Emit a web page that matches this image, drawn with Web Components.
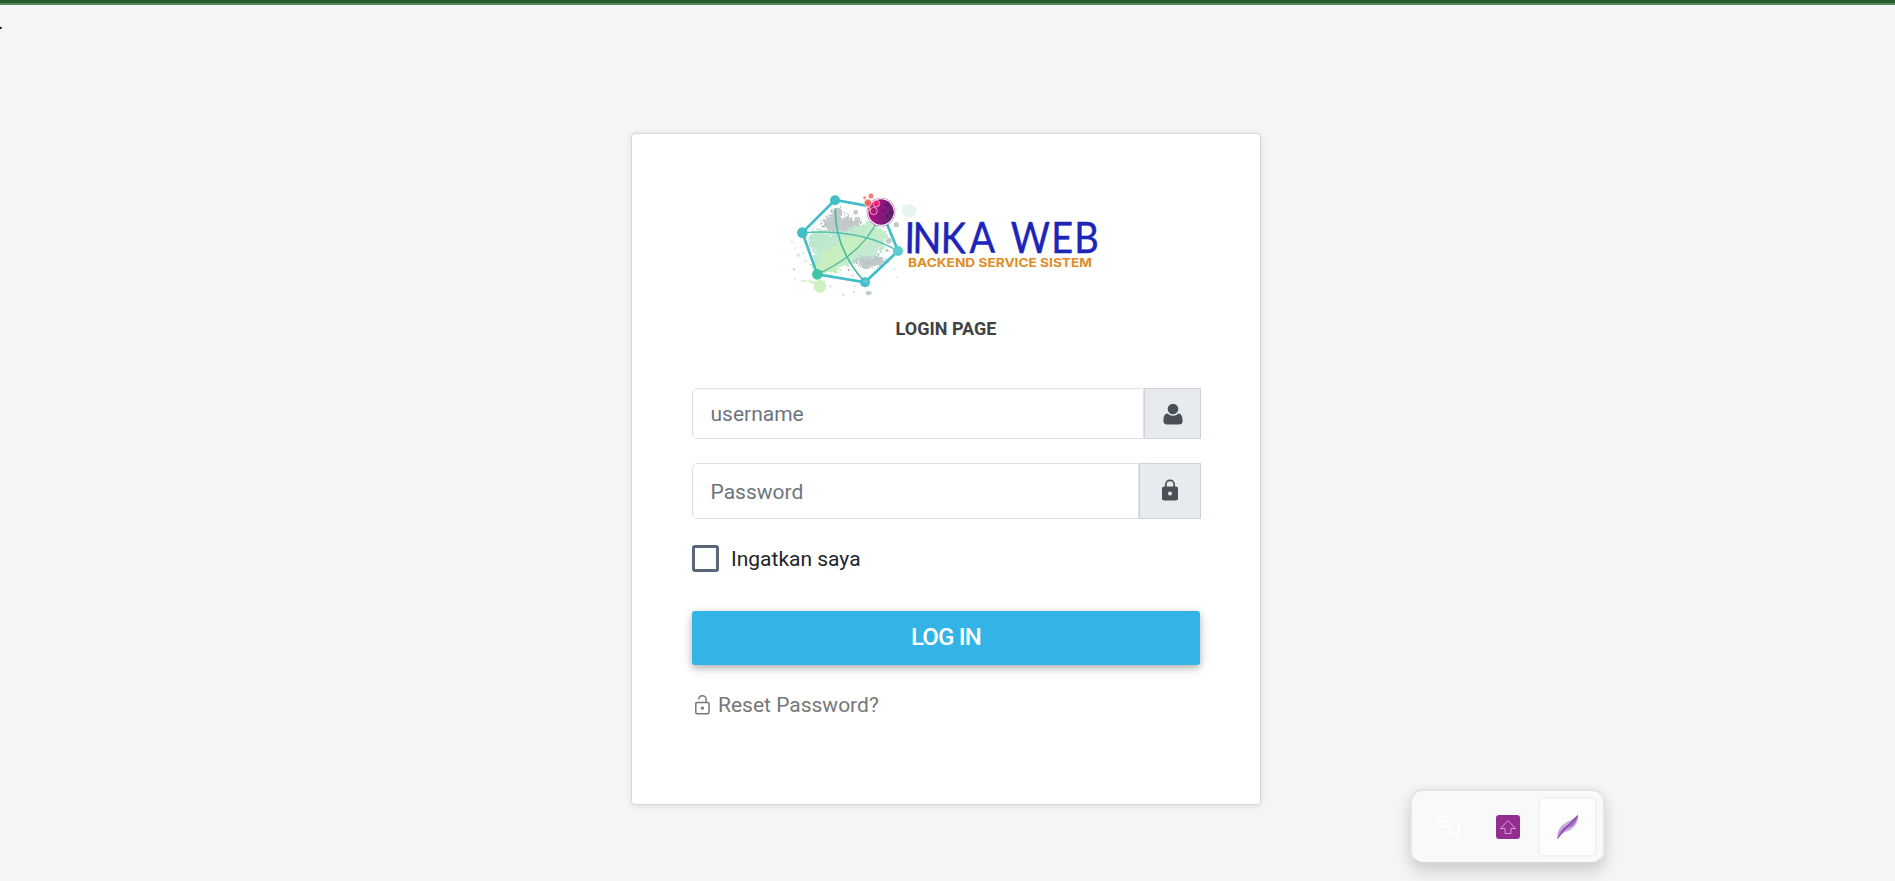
<!DOCTYPE html>
<html lang="id">
<head>
<meta charset="utf-8">
<title>Login</title>
<style>
html,body{margin:0;height:100%;overflow:hidden;background:#f5f5f5;font-family:Roboto,sans-serif}
</style>
</head>
<body>
<login-page></login-page>
<script>
const define = (name, html) => customElements.define(name, class extends HTMLElement {
  constructor() {
    super();
    const t = document.createElement('template');
    t.innerHTML = html;
    this.attachShadow({mode: 'open'}).append(t.content.cloneNode(true));
  }
});

define('inka-logo', `
<style>:host{display:block;width:330px;height:125px}svg{display:block}</style>
<svg width="330" height="125" viewBox="0 0 990 375">
  <defs><linearGradient id="ball" x1="0" y1="0" x2="1" y2="0.3"><stop offset="0" stop-color="#c5107c"/><stop offset=".5" stop-color="#981380"/><stop offset="1" stop-color="#65246f"/></linearGradient>
  <linearGradient id="mint" x1="0" y1="0" x2="1" y2="1"><stop offset="0" stop-color="#b5e5d4"/><stop offset=".55" stop-color="#c5eccb"/><stop offset="1" stop-color="#bfe8dc"/></linearGradient>
  <filter id="splash" x="-10%" y="-10%" width="120%" height="120%"><feTurbulence type="fractalNoise" baseFrequency=".12" numOctaves="3" seed="4"/><feDisplacementMap in="SourceGraphic" scale="34" xChannelSelector="R" yChannelSelector="G"/></filter></defs>
  <g fill="#c3c8ca" filter="url(#splash)">
    <path d="M126 118l22-9 14-22 20-4 8 17-9 14 22-5 18 9 15-7 8 18-14 12-5 20-28 6-22-12-18 5-16-13-13-3z"/>
    <path d="M217 232l27-12 18 12 21-9 24 5 8 18-13 13-21-2-13 10-24-2-5-15-20 2z"/>
    <path d="M88 190l18-9 14 9-5 22-20 4z"/><path d="M288 151l20-5 13 19-8 15-21-3z"/>
  </g>
  <g fill="#c3c8ca"><circle cx="227" cy="97" r="7"/><circle cx="349" cy="134" r="8"/><circle cx="326" cy="182" r="9"/><ellipse cx="266" cy="339" rx="9" ry="6" fill="#b9cfc9"/><circle cx="321" cy="211" r="5"/><circle cx="174" cy="96" r="13"/></g>
  <g filter="url(#splash)">
  <path d="M86 169l17-20 32 3 16 11 20-12 28 3 22-15 27-3 18-13 21 3 14 22 20 6 2 23-14 14 1 20-20 10-11 14-23-4-20 15-18-2-13 13-24-1-15 16-25 5-20-5-24-9-1-20 11-16-7-18-16-14z" fill="url(#mint)"/>
  <path d="M158 199l32-25 35-8 18 11 25-3-15 24-27 15-10 21-29 14-9 25-27 10-28-3-22-13 18-18 3-23z" fill="#c9f0bd" opacity=".85"/>
  <path d="M222 240l20-14 10 10 22-4 20-4 12 10-14 14-20-2-10 8-22-2z" fill="#bcc8ca" opacity=".85"/>
  </g>
  <path d="M102 306l15-7 17 3 5 18-8 16-16 3-14-11zM70 300l30 2 8 8-10 2-14-8-14 1z" fill="#cff0c0"/>
  <path d="M367 78l26-6 17 13-4 21-21 8-17-12zM344 82l10 1-3 9-8-1z" fill="#e7f5ef"/>
  <g fill="#d8eedf"><circle cx="36" cy="186" r="4"/><circle cx="47" cy="205" r="3"/><circle cx="55" cy="225" r="6"/><circle cx="42" cy="268" r="4" fill="#bfe5b5"/><circle cx="76" cy="243" r="4"/><circle cx="70" cy="219" r="4"/><circle cx="343" cy="267" r="4"/><circle cx="351" cy="292" r="3"/><circle cx="226" cy="318" r="4"/><circle cx="151" cy="319" r="4"/><circle cx="66" cy="303" r="4"/><circle cx="45" cy="297" r="3"/><circle cx="380" cy="117" r="3"/></g>
  <g fill="#a5adaf"><circle cx="128" cy="96" r="2"/><circle cx="135" cy="88" r="2"/><circle cx="206" cy="270" r="3"/><circle cx="218" cy="286" r="2"/><circle cx="140" cy="269" r="2"/><circle cx="290" cy="279" r="2"/><circle cx="323" cy="246" r="3"/><circle cx="81" cy="142" r="2"/><circle cx="165" cy="276" r="2"/><circle cx="305" cy="263" r="2"/><circle cx="222" cy="336" r="2"/><circle cx="190" cy="345" r="2"/></g>
  <g fill="none" stroke="#42bec9" stroke-width="8"><path d="M258 77L165 60 67 158 112 283 255 307 354 213 304 90"/></g>
  <g fill="none"><path d="M67 158Q240 145 354 213" stroke="#57bfae" stroke-width="4"/><path d="M166 85Q163 205 255 307" stroke="#4abaa4" stroke-width="5"/><path d="M112 283Q250 220 296 115" stroke="#50bda1" stroke-width="4"/></g>
  <g fill="#42bec9"><circle cx="165" cy="61" r="15"/><circle cx="67" cy="158" r="16"/><circle cx="112" cy="283" r="16" fill="#41c4a1"/><circle cx="255" cy="307" r="15"/><circle cx="354" cy="213" r="15" fill="#5bcbd0"/></g>
  <path d="M250 301l8-4 7 7-6 6-10-1z" fill="#62c9d1"/>
  <circle cx="303" cy="96" r="43" fill="#b77ba8"/><circle cx="303" cy="96" r="41" fill="#fff"/><circle cx="303" cy="96" r="38" fill="url(#ball)"/>
  <g fill="#4f1c62" opacity=".65"><circle cx="320" cy="75" r="7"/><circle cx="335" cy="98" r="7"/><circle cx="322" cy="108" r="6"/><circle cx="310" cy="92" r="4"/></g>
  <g stroke="#f5dfe5" stroke-width="2"><circle cx="264" cy="69" r="11" fill="#ed675e"/><circle cx="273" cy="48" r="8" fill="#ef7b68"/><circle cx="254" cy="53" r="5" fill="#ee886e"/><circle cx="289" cy="71" r="10" fill="#e7207a"/><circle cx="281" cy="93" r="11" fill="#b0177c"/><circle cx="266" cy="87" r="5" fill="#e54c76"/></g>
  <text transform="scale(.88 1)" x="424 451 547 646 740 787 925 1003" y="219" rotate="1 1 1 -1 0 0 0 0" font-family="Lato,sans-serif" font-size="129" fill="#1c25b8" stroke="#1c25b8" stroke-width="1.500" stroke-linejoin="round">INKA WEB</text>
  <text x="384" y="262" font-family="Inter,sans-serif" font-size="36" font-weight="700" fill="#df8d25" textLength="552" lengthAdjust="spacingAndGlyphs">BACKEND SERVICE SISTEM</text>
</svg>`);

define('input-field', `
<style>
:host{display:flex;box-sizing:border-box;width:509px;height:var(--h);font-size:21px;color:#6c757d}
.box{flex:1;box-sizing:border-box;border:1px solid #dfe1e3;border-radius:5px 0 0 5px;padding:var(--pt,0) 0 0 17.5px;display:flex;align-items:center;background:#fff}
.addon{box-sizing:border-box;width:var(--w);border:1px solid #cdd3dc;background:#e8ebee;display:flex;align-items:center;justify-content:center}
</style><div class="box"><slot></slot></div><div class="addon"><slot name="icon"></slot></div>`);

define('check-box', `
<style>:host{display:flex;align-items:center;gap:12px;height:27px;font-size:21px;color:#212529}
i{box-sizing:border-box;width:27px;height:27px;border:3px solid #5a6779;border-radius:3px}</style><i></i><span><slot></slot></span>`);

define('action-button', `
<style>:host{display:flex;align-items:center;justify-content:center;height:54px;box-sizing:border-box;padding-bottom:2px;background:#34b4e6;color:#fff;font-size:24px;font-weight:500;letter-spacing:-.8px;border-radius:3px;box-shadow:0 3px 6px rgba(0,0,0,.2),0 3px 13px rgba(0,0,0,.14)}</style><span><slot></slot></span>`);

define('floating-bar', `
<style>
:host{position:absolute;left:1410px;top:786px;width:195px;height:75px;box-sizing:border-box;border:2px solid #e5e5e5;border-bottom-color:#d5d5d5;border-radius:13px;background:#f9f9f9;box-shadow:0 8px 16px rgba(0,0,0,.15),0 0 8px rgba(0,0,0,.04);display:flex;align-items:center;padding-left:6px}
div{width:60px;height:60px;display:flex;align-items:center;justify-content:center;box-sizing:border-box}
div:first-child{padding-right:3px}
.on{width:59px;border:2px solid #f2f2f2;border-radius:6px;background:#fdfdfd}
svg{display:block}
</style>
<div><svg width="26" height="26" viewBox="0 0 26 26" fill="none" stroke="#fff" stroke-width="1.500"><path d="M2 2h14M2 7h13M2 12h10M14 12v7h5l5 4V8l-5 4z"/></svg></div>
<div><svg width="24" height="24"><rect width="24" height="24" rx="3" fill="#942d90"/><path d="M12 5.500L4.500 13.500H9V18.500H15V13.500H19.500Z" fill="none" stroke="#d0a0ce" stroke-width="1"/></svg></div>
<div class="on"><svg width="24" height="24"><path d="M1.500 23.500C.5 14 6 9.500 13 6 18 3.500 20 1 22 .5 22.300 8 18 14 11 16.500 5 18.500 3 21 1.500 23.500Z" fill="#c8abdf"/><path d="M1.500 23.500C4 14 8 13 13 9 17 6 19 3 22 .5 21 6 18 11 12 13 6 16 4 19 1.500 23.500Z" fill="#9f64c4"/><path d="M1.500 23.500Q10 11 22 .5" fill="none" stroke="#762fa6" stroke-width="1"/></svg></div>`);

define('login-card', `
<style>
:host{display:block;box-sizing:border-box;width:630px;height:672px;background:#fff;border:1px solid #d6d6d6;border-radius:4px;box-shadow:0 1px 7px rgba(0,0,0,.1);padding:46px 60px 0}
inka-logo{margin-left:88px}
h1{margin:12px 0 0;font-size:18px;line-height:24px;font-weight:700;text-align:center;color:#424242}
input-field{margin-top:47px}input-field+input-field{margin-top:24px}
check-box{margin-top:26px}action-button{margin-top:39px;width:508px}
a{display:flex;align-items:center;margin-top:25px;height:30px;font-size:21px;color:#777}
a svg{margin:0 8px 0 3px}
svg{display:block}
</style>
<inka-logo></inka-logo>
<h1>LOGIN PAGE</h1>
<input-field style="--h:51px;--w:57px">username<svg slot="icon" width="20" height="22" viewBox="0 0 20 22" fill="#495057"><circle cx="10" cy="6" r="5.300"/><path d="M4.700 10.500C6.200 12 7.800 12.700 10 12.700s3.800-.7 5.300-2.200C18.500 10.500 19.600 14 19.600 18 19.600 20.500 18 21.500 16 21.500H4C2 21.500.4 20.500.4 18 .4 14 1.500 10.500 4.700 10.500Z"/></svg></input-field>
<input-field style="--h:56px;--w:62px;--pt:1px">Password<svg slot="icon" width="16" height="22" viewBox="0 0 16 22" style="margin-bottom:3px"><path d="M3.800 8V5.500a4.200 4.200 0 0 1 8.400 0V8" fill="none" stroke="#495057" stroke-width="1.700"/><path fill="#495057" fill-rule="evenodd" d="M2 7.500H14Q16 7.500 16 9.500V19.500Q16 21.500 14 21.500H2Q0 21.500 0 19.500V9.500Q0 7.500 2 7.500ZM8 12.400a2 2 0 1 0 0 4 2 2 0 1 0 0-4Z"/></svg></input-field>
<check-box>Ingatkan saya</check-box>
<action-button>LOG IN</action-button>
<a><svg width="15" height="20" viewBox="0 0 15 20" fill="none" stroke="#777" stroke-width="1.500"><rect x=".8" y="7.500" width="13.200" height="11.200" rx="1.200"/><path d="M3.700 4.500a3.700 3.700 0 0 1 7.400 0V7.500"/><circle cx="7.400" cy="13.100" r="1.700" fill="#777" stroke="none"/></svg>Reset Password?</a>`);

define('login-page', `
<style>
:host{display:flex;flex-direction:column;align-items:center;position:relative;height:881px;box-sizing:border-box;border-top:3px solid #265d2b;background:#f5f5f5}
.edge{width:100%;height:2px;background:#528454}
login-card{margin-top:128px;margin-right:3px}
.mark{position:absolute;left:-2px;top:9px;font-size:20px;line-height:20px;color:#111}
</style>
<div class="edge"></div><span class="mark">.</span>
<login-card></login-card><floating-bar></floating-bar>`);
</script>
</body>
</html>
